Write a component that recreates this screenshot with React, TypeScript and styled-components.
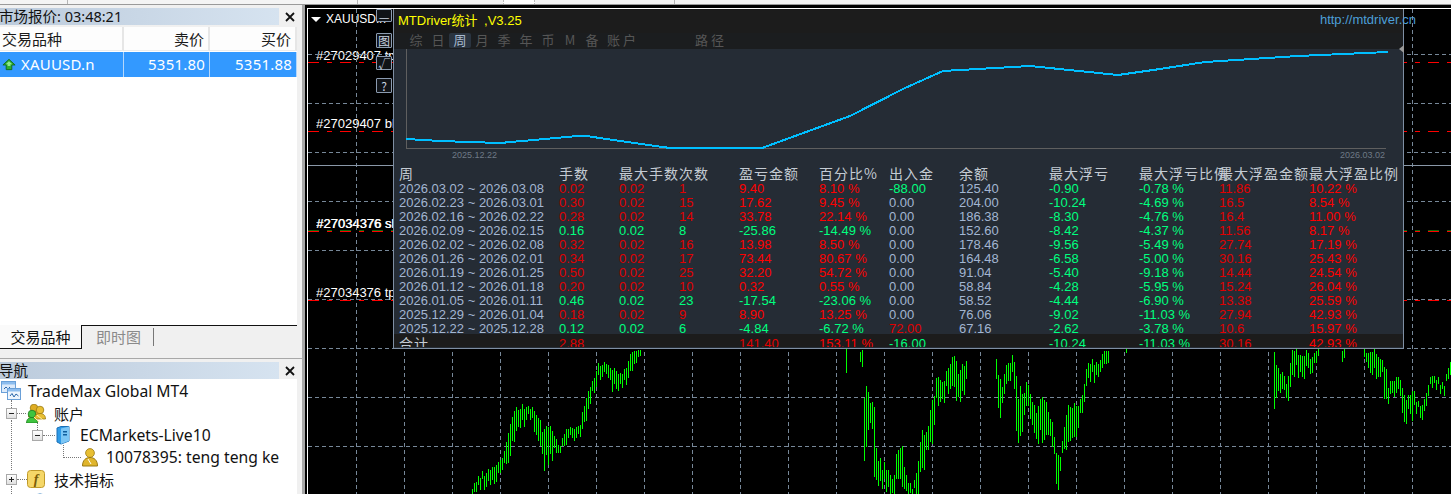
import React from "react";
import styled, { createGlobalStyle } from "styled-components";

const Global = createGlobalStyle`
  html, body { margin: 0; padding: 0; background: #f0f0f0; }
  #root { width: 1451px; height: 494px; overflow: hidden; }
`;

const UI = `"Noto Sans", "Noto Sans CJK SC", sans-serif`;
const MT = `"Liberation Sans", "Noto Sans CJK SC", sans-serif`;
const CJK = `"Noto Sans CJK SC", "Liberation Sans", sans-serif`;

const Page = styled.div`
  width: 1451px;
  height: 494px;
  display: flex;
  flex-direction: column;
  overflow: hidden;
  background: #f0f0f0;
`;
const TopStrip = styled.div`
  height: 4px;
  flex: none;
  display: flex;
  background: #f4f4f4;
  border-bottom: 1px solid #9a9a9a;
`;
const StripTick = styled.span<{ $at: number; $w?: number }>`
  margin-left: ${(p) => p.$at}px;
  width: ${(p) => p.$w ?? 1}px;
  background: ${(p) => (p.$w ? "#fff" : "#b5b5b5")};
  border-left: ${(p) => (p.$w ? "1px dotted #bbb" : "0")};
  border-right: ${(p) => (p.$w ? "1px dotted #bbb" : "0")};
`;
const Main = styled.div`
  flex: 1;
  display: flex;
  min-height: 0;
`;
const Sidebar = styled.aside`
  width: 305px;
  flex: none;
  display: flex;
  flex-direction: column;
  padding-top: 3px;
  box-sizing: border-box;
  border-right: 3px solid #a8a8a8;
  font-family: ${UI};
`;
const PanelHeader = styled.div`
  display: flex;
  align-items: center;
  height: 17px;
  flex: none;
`;
const PanelTitle = styled.div`
  width: 279px;
  height: 17px;
  flex: none;
  background: linear-gradient(90deg, #bccbdc 0%, #d6e3f0 100%);
  font-size: 14.5px;
  line-height: 17px;
  color: #111;
  white-space: nowrap;
  overflow: hidden;
  text-indent: -1px;
`;
const CloseBox = styled.div`
  width: 22px;
  display: flex;
  justify-content: center;
  svg { display: block; }
`;
const Watch = styled.section`
  height: 298px;
  flex: none;
  width: 297px;
  margin-top: 2px;
  background: #fff;
`;
const QuoteGrid = styled.div`
  display: grid;
  grid-template-columns: 124px 86px 87px;
`;
const QuoteHead = styled.div<{ $right?: boolean }>`
  height: 24px;
  box-sizing: border-box;
  margin-bottom: 1px;
  padding: 0 ${(p) => (p.$right ? "4px" : "2px")};
  text-align: ${(p) => (p.$right ? "right" : "left")};
  background: #fdfdfd;
  border-right: 2px solid #e6e6e6;
  border-bottom: 1px solid #ececec;
  font-family: ${CJK};
  font-size: 15px;
  line-height: 23px;
  color: #1b1b1b;
`;
const QuoteCell = styled.div<{ $right?: boolean }>`
  height: 25px;
  box-sizing: border-box;
  display: flex;
  align-items: center;
  justify-content: ${(p) => (p.$right ? "flex-end" : "flex-start")};
  padding: 0 ${(p) => (p.$right ? "4px" : "2px")} 2px;
  gap: 5px;
  background: #3399ff;
  border-right: 1px solid #b5d7fb;
  color: #fff;
  font-size: 15px;
  letter-spacing: 0.2px;
  svg { flex: none; margin-top: 2px; }
`;
const PanelTabs = styled.div`
  height: 29px;
  flex: none;
  width: 297px;
  display: flex;
  align-items: flex-start;
  border-top: 1px solid #111;
  box-sizing: border-box;
  background: #f0f0f0;
  font-family: ${CJK};
  font-size: 15px;
`;
const ActiveTab = styled.div`
  width: 82px;
  height: 24px;
  box-sizing: border-box;
  margin-top: -1px;
  border-right: 1px solid #111;
  border-bottom: 1px solid #111;
  background: #fafafa;
  text-align: center;
  line-height: 24px;
  color: #111;
  position: relative;
`;
const IdleTab = styled.div`
  margin: 2px 0 0 0;
  padding: 0 12px 0 14px;
  height: 18px;
  line-height: 18px;
  color: #8a8a8a;
  border-right: 1px solid #777;
`;
const Divider = styled.div`
  height: 4px;
  flex: none;
  margin-bottom: 3px;
  border-bottom: 1px solid #a8a8a8;
`;
const Tree = styled.section`
  flex: 1;
  width: 297px;
  background: #fff;
  overflow: hidden;
  padding-top: 1px;
  position: relative;
`;
const Rail = styled.span<{ $x: number; $top: number; $h: number }>`
  position: absolute;
  left: ${(p) => p.$x}px;
  top: ${(p) => p.$top}px;
  height: ${(p) => p.$h}px;
  border-left: 1px dotted #777;
`;
const TreeRow = styled.div<{ $indent: number }>`
  height: 22px;
  display: flex;
  align-items: center;
  padding-left: ${(p) => p.$indent}px;
  font-size: 15.7px;
  color: #111;
  white-space: nowrap;
`;
const Expander = styled.span`
  width: 11px;
  height: 11px;
  box-sizing: border-box;
  flex: none;
  border: 1px solid #a9a9a9;
  background: linear-gradient(#fff, #e0e0e0);
  position: relative;
  &::before {
    content: "";
    position: absolute;
    left: 2px; right: 2px; top: 4px; height: 1px;
    background: #222;
  }
`;
const PlusExpander = styled(Expander)`
  &::after {
    content: "";
    position: absolute;
    top: 2px; bottom: 2px; left: 4px; width: 1px;
    background: #222;
  }
`;
const Dots = styled.span<{ $w: number }>`
  width: ${(p) => p.$w}px;
  flex: none;
  border-top: 1px dotted #777;
`;
const Elbow = styled.span<{ $w: number }>`
  width: ${(p) => p.$w}px;
  height: 13px;
  flex: none;
  margin-top: -12px;
  border-left: 1px dotted #777;
  border-bottom: 1px dotted #777;
  box-sizing: border-box;
`;
const TreeLabel = styled.span<{ $gap: number; $cjk?: boolean }>`
  margin-left: ${(p) => p.$gap}px;
  font-family: ${(p) => (p.$cjk ? CJK : UI)};
  font-size: ${(p) => (p.$cjk ? "15px" : "inherit")};
`;
const IconSlot = styled.span`
  display: flex;
  flex: none;
  svg { display: block; }
`;

const ChartArea = styled.main`
  flex: 1;
  min-width: 0;
  background: #000;
  padding: 3px 0 0 2px;
`;
const Canvas = styled.div`
  position: relative;
  height: 100%;
  border-top: 1px solid #fff;
  border-left: 1px solid #fff;
  font-family: ${MT};
  svg.chart { position: absolute; left: 0; top: 0; }
`;
const SymbolLabel = styled.div`
  position: absolute;
  left: 3px;
  top: 3px;
  display: flex;
  align-items: center;
  gap: 5px;
  width: 75px;
  overflow: hidden;
  white-space: nowrap;
  color: #fff;
  font-size: 12px;
  line-height: 15px;
`;
const SymbolCaret = styled.span`
  flex: none;
  width: 0;
  height: 0;
  border-left: 5px solid transparent;
  border-right: 5px solid transparent;
  border-top: 5px solid #fff;
`;
const OrderLabel = styled.div<{ $top: number; $heavy?: boolean }>`
  position: absolute;
  left: 8px;
  top: ${(p) => p.$top}px;
  width: 77px;
  overflow: hidden;
  white-space: nowrap;
  color: #fff;
  font-size: 13px;
  line-height: 15px;
  text-shadow: ${(p) => (p.$heavy ? "0.6px 0 #fff" : "none")};
`;
const ChartButton = styled.div<{ $top: number; $h: number }>`
  position: absolute;
  left: 68px;
  top: ${(p) => p.$top}px;
  width: 14px;
  height: ${(p) => p.$h}px;
  border: 1px solid #8b9bb0;
  border-radius: 1px;
  background: #101317;
  color: #c9d3e0;
  font-family: ${CJK};
  font-size: 12px;
  line-height: 13px;
  text-align: center;
`;

const Window = styled.div`
  position: absolute;
  left: 85px;
  top: 0;
  width: 1011px;
  height: 340px;
  box-sizing: border-box;
  display: flex;
  flex-direction: column;
  background: #252c35;
  border-left: 1px solid #7f8fa3;
  border-right: 1px solid #7f8fa3;
  border-bottom: 1px solid #7f8fa3;
`;
const TitleBar = styled.div`
  height: 24px;
  flex: none;
  display: flex;
  align-items: center;
  justify-content: space-between;
  padding: 0 0 3px 4px;
  box-sizing: border-box;
  background: #1c1c1c;
  font-size: 13px;
  word-spacing: 3px;
  color: #ffff00;
  white-space: nowrap;
`;
const SiteLink = styled.span`
  color: #4c9fd8;
  margin-right: -13px;
  position: relative;
  font-size: 13px;
`;
const TabBar = styled.div`
  height: 16px;
  flex: none;
  display: flex;
  padding-left: 11px;
  background: #1b1d1f;
  font-family: ${CJK};
  font-size: 13px;
  color: #565656;
`;
const PeriodTab = styled.span<{ $active?: boolean; $w?: number; $gap?: number }>`
  width: ${(p) => p.$w ?? 22}px;
  margin-left: ${(p) => p.$gap ?? 0}px;
  height: 15px;
  line-height: 13px;
  text-align: center;
  letter-spacing: ${(p) => (p.$w ? "3px" : "0")};
  border-radius: 2px;
  color: ${(p) => (p.$active ? "#a9b9ce" : "inherit")};
  background: ${(p) => (p.$active ? "#2a3440" : "transparent")};
`;
const Plot = styled.div`
  height: 116px;
  flex: none;
  position: relative;
  svg { display: block; }
`;
const DateMark = styled.span<{ $left: number }>`
  position: absolute;
  left: ${(p) => p.$left}px;
  top: 100px;
  font-size: 9px;
  line-height: 12px;
  color: #6f7a86;
`;
const EdgeMark = styled.span`
  position: absolute;
  right: -1px;
  top: -4px;
  width: 0;
  height: 0;
  border-top: 4px solid transparent;
  border-bottom: 4px solid transparent;
  border-right: 5px solid #9a9a9a;
`;
const Table = styled.div`
  flex: 1;
  min-height: 0;
  overflow: hidden;
  display: grid;
  grid-template-columns: 165px 60px 60px 60px 80px 70px 70px 90px 90px 80px 90px 1fr;
  grid-auto-rows: 14px;
  grid-template-rows: 15px;
  font-size: 13px;
  white-space: nowrap;
`;
const HeadCell = styled.div<{ $first?: boolean }>`
  padding-left: ${(p) => (p.$first ? "5px" : "0")};
  font-family: ${CJK};
  font-size: 14px;
  line-height: 16px;
  letter-spacing: 1px;
  color: #c4cbd3;
`;
const toneColor: Record<string, string> = {
  label: "#a3b6d2",
  red: "#e00000",
  bright: "#ff0000",
  green: "#00ff7f",
};
const Cell = styled.div<{ $tone: string; $first?: boolean }>`
  padding-left: ${(p) => (p.$first ? "5px" : "0")};
  line-height: 17px;
  color: ${(p) => toneColor[p.$tone]};
`;
const TotalCell = styled.div<{ $tone: string; $first?: boolean }>`
  height: 13px;
  overflow: hidden;
  background: #1c1c1c;
  padding-left: ${(p) => (p.$first ? "5px" : "0")};
  font-family: ${(p) => (p.$first ? CJK : MT)};
  font-size: ${(p) => (p.$first ? "14px" : "13px")};
  line-height: 19px;
  letter-spacing: ${(p) => (p.$first ? "1px" : "0")};
  color: ${(p) => (p.$first ? "#c4cbd3" : toneColor[p.$tone])};
`;

/* ---------- data ---------- */
const heads = ["周", "手数", "最大手数", "次数", "盈亏金额", "百分比%", "出入金", "余额", "最大浮亏", "最大浮亏比例", "最大浮盈金额", "最大浮盈比例"];
type Row = [string, string, string, string, string, string, string, string, string, string, string, string];
const rows: Row[] = [
  ["2026.03.02 ~ 2026.03.08", "0.02", "0.02", "1", "9.40", "8.10 %", "-88.00", "125.40", "-0.90", "-0.78 %", "11.86", "10.22 %"],
  ["2026.02.23 ~ 2026.03.01", "0.30", "0.02", "15", "17.62", "9.45 %", "0.00", "204.00", "-10.24", "-4.69 %", "16.5", "8.54 %"],
  ["2026.02.16 ~ 2026.02.22", "0.28", "0.02", "14", "33.78", "22.14 %", "0.00", "186.38", "-8.30", "-4.76 %", "16.4", "11.00 %"],
  ["2026.02.09 ~ 2026.02.15", "0.16", "0.02", "8", "-25.86", "-14.49 %", "0.00", "152.60", "-8.42", "-4.37 %", "11.56", "8.17 %"],
  ["2026.02.02 ~ 2026.02.08", "0.32", "0.02", "16", "13.98", "8.50 %", "0.00", "178.46", "-9.56", "-5.49 %", "27.74", "17.19 %"],
  ["2026.01.26 ~ 2026.02.01", "0.34", "0.02", "17", "73.44", "80.67 %", "0.00", "164.48", "-6.58", "-5.00 %", "30.16", "25.43 %"],
  ["2026.01.19 ~ 2026.01.25", "0.50", "0.02", "25", "32.20", "54.72 %", "0.00", "91.04", "-5.40", "-9.18 %", "14.44", "24.54 %"],
  ["2026.01.12 ~ 2026.01.18", "0.20", "0.02", "10", "0.32", "0.55 %", "0.00", "58.84", "-4.28", "-5.95 %", "15.24", "26.04 %"],
  ["2026.01.05 ~ 2026.01.11", "0.46", "0.02", "23", "-17.54", "-23.06 %", "0.00", "58.52", "-4.44", "-6.90 %", "13.38", "25.59 %"],
  ["2025.12.29 ~ 2026.01.04", "0.18", "0.02", "9", "8.90", "13.25 %", "0.00", "76.06", "-9.02", "-11.03 %", "27.94", "42.93 %"],
  ["2025.12.22 ~ 2025.12.28", "0.12", "0.02", "6", "-4.84", "-6.72 %", "72.00", "67.16", "-2.62", "-3.78 %", "10.6", "15.97 %"],
];
const totals = ["合计", "2.88", "", "", "141.40", "153.11 %", "-16.00", "", "-10.24", "-11.03 %", "30.16", "42.93 %"];

function toneFor(col: number, value: string, loss: boolean): string {
  if (col === 0 || col === 7) return "label";
  if (col === 6) return value === "0.00" ? "label" : value.startsWith("-") ? "green" : "red";
  if (col === 8 || col === 9) return "green";
  if (col === 10) return "red";
  if (col === 11) return "bright";
  if (loss) return "green";
  return col === 4 || col === 5 ? "bright" : "red";
}
const totalTones = ["label", "red", "red", "red", "red", "bright", "green", "label", "green", "green", "red", "bright"];

type Pt = [number, number, number];
const candleSegments: Pt[][] = [
  [[471,487,494],[478,477,487],[492,465,480],[503,455,468],[509,423,453],[516,400,430],[529,408,418],[537,410,440],[544,418,467],[552,428,457],[559,445,448],[566,425,438],[579,427,438],[583,407,432],[587,390,410],[592,380,392],[598,362,377],[607,362,373],[614,370,395],[624,370,383],[631,348,365],[640,350,355]],
  [[846,348,373]],
  [[859,348,353],[862,350,372],[863,370,445],[865,370,494],[867,368,423],[869,398,440],[872,398,427],[874,402,473],[877,453,483],[880,457,494],[893,478,494],[896,455,494],[898,438,494],[902,443,487],[905,473,494],[913,488,494],[918,457,494],[921,428,462],[924,423,472],[927,430,453],[933,377,437],[936,370,403],[942,380,402],[947,368,392],[953,348,383],[958,363,403],[964,362,390],[967,348,372]],
  [[995,348,360],[998,373,418],[1002,377,407],[1007,358,387],[1013,348,375],[1016,363,450],[1022,390,430],[1027,372,397],[1031,397,420],[1037,405,440],[1044,390,443],[1049,413,437],[1053,422,448],[1057,447,494],[1060,453,465],[1064,423,447],[1069,393,440],[1077,403,428],[1082,392,408],[1086,368,397],[1091,360,382],[1098,362,375],[1103,348,360],[1109,348,360]],
  [[1125,348,353]],
  [[1274,348,405],[1277,363,390],[1282,370,390],[1287,380,400],[1291,348,380],[1299,350,372],[1310,353,377],[1315,348,365],[1319,348,355]],
  [[1341,348,355],[1344,348,360]],
  [[1364,348,360],[1377,348,377],[1381,358,370],[1386,367,413],[1388,383,400],[1393,378,392],[1399,372,388],[1404,390,423],[1408,397,418],[1412,387,418],[1417,402,407],[1422,403,417],[1426,390,402],[1432,373,383],[1441,382,388],[1445,382,390],[1450,358,373]],
];
function candleBars(): { x: number; t: number; b: number }[] {
  const bars: { x: number; t: number; b: number }[] = [];
  const lattice = (v: number) => v + (v % 2);
  const rnd = (v: number) => v - Math.floor(v);
  for (const seg of candleSegments) {
    if (seg.length === 1) {
      bars.push({ x: lattice(seg[0][0]), t: seg[0][1], b: seg[0][2] });
      continue;
    }
    for (let x = lattice(seg[0][0]); x <= seg[seg.length - 1][0]; x += 2) {
      const i = Math.max(0, seg.findIndex((p, n) => n + 1 < seg.length && x >= p[0] && x <= seg[n + 1][0]));
      const [x0, t0, b0] = seg[i];
      const [x1, t1, b1] = seg[i + 1];
      const k = (x - x0) / (x1 - x0);
      const lo = t0 + (t1 - t0) * k;
      const hi = b0 + (b1 - b0) * k;
      const j1 = rnd(Math.sin(x * 12.9898) * 43758.5453);
      const j2 = rnd(Math.sin(x * 78.233) * 12543.12);
      const len = (hi - lo) * (0.4 + 0.6 * j1) + 3;
      const start = lo + (hi - lo - len + 3) * j2 + (j1 - 0.5) * 8;
      const t = Math.max(348, Math.round(start));
      bars.push({ x, t, b: Math.round(t + len) });
    }
  }
  return bars;
}

const verticals = Array.from({ length: 23 }, (_, i) => 356 + 48 * i);
const horizontals = Array.from({ length: 9 }, (_, i) => 54 + 49 * i);
const orderLines = [62, 131, 231, 300];
const equity = "406,139 440,141 500,143 583,135.5 620,141 670,148 762,148 850,116 905,88 943,71 1030,66 1118,75 1160,69 1205,62 1298,56 1388,52";

/* ---------- icons ---------- */
const CloseIcon = () => (
  <svg width="10" height="10" viewBox="0 0 10 10"><path d="M1 1L9 9M9 1L1 9" stroke="#111" strokeWidth="1.8" /></svg>
);
const UpArrow = () => (
  <svg width="14" height="13" viewBox="0 0 15 13">
    <path d="M7.5 1L14 7H10.5V12H4.5V7H1Z" fill="#2fae2f" stroke="#0f6b1f" strokeWidth="1" />
    <path d="M7.5 3L4 6.2H6V8H9V6.2H11Z" fill="#8fe88f" />
  </svg>
);
const RootIcon = () => (
  <svg width="20" height="20" viewBox="0 0 20 20">
    <rect x="0.5" y="0.5" width="14" height="11" fill="#dceafa" stroke="#6aa0d8" />
    <rect x="1" y="1" width="13" height="2.5" fill="#8dbdee" />
    <path d="M3 8L5 6L7 8L9 6" fill="none" stroke="#2a66a8" />
    <rect x="6.5" y="7.5" width="13" height="11" fill="#eef5fd" stroke="#6aa0d8" />
    <rect x="7" y="8" width="12" height="2.5" fill="#8dbdee" />
    <path d="M9 15L11 12.5L13 16L15 13L17.5 15" fill="none" stroke="#2a66a8" />
  </svg>
);
const Person = ({ x, y, c = "#e8bf33", s = "#9a7a12" }: { x: number; y: number; c?: string; s?: string }) => (
  <g transform={`translate(${x} ${y})`}>
    <circle cx="6" cy="4" r="3.8" fill={c} stroke={s} strokeWidth="0.8" />
    <path d="M0.5 13C0.5 9 3 7.5 6 7.5S11.5 9 11.5 13Z" fill={c} stroke={s} strokeWidth="0.8" />
  </g>
);
const UsersIcon = () => (
  <svg width="20" height="19" viewBox="0 0 20 19">
    <Person x={2} y={0} c="#e0ad22" />
    <Person x={0} y={6} c="#3fc43f" s="#1d7a1d" />
    <Person x={8} y={2} />
    <path d="M8 13L13 18M11 11L17 16" stroke="#fff2a8" />
  </svg>
);
const ServerIcon = () => (
  <svg width="16" height="20" viewBox="0 0 16 20">
    <path d="M2 3L6 1.5H14V16L6 19L2 17Z" fill="#2e9be8" stroke="#1a6fb5" />
    <path d="M6 3.5L14 1.5V16L6 19Z" fill="#7cc6f5" />
    <rect x="8" y="6" width="4" height="1.5" fill="#0f5d9c" />
    <rect x="8" y="9" width="4" height="1.5" fill="#0f5d9c" />
  </svg>
);
const UserIcon = () => (
  <svg width="18" height="19" viewBox="0 0 18 19">
    <circle cx="9" cy="5" r="4.4" fill="#e8bf33" stroke="#9a7a12" strokeWidth="0.8" />
    <path d="M1.5 18C1.5 12 5 9.5 9 9.5S16.5 12 16.5 18Z" fill="#e0b52c" stroke="#9a7a12" />
    <path d="M7 11L10 16" stroke="#fff" />
  </svg>
);
const FuncIcon = () => (
  <svg width="18" height="18" viewBox="0 0 18 18">
    <rect x="0.5" y="0.5" width="17" height="17" rx="3" fill="#f5d768" stroke="#c09a2a" />
    <text x="9" y="14" textAnchor="middle" fontFamily="Liberation Serif, serif" fontStyle="italic" fontWeight="700" fontSize="14" fill="#7a5c08">f</text>
  </svg>
);
const ScriptIcon = () => (
  <svg width="16" height="16" viewBox="0 0 16 16"><circle cx="8" cy="8" r="7" fill="#3a9ad9" stroke="#1a6fb5" /></svg>
);

export default function App() {
  const bars = candleBars();
  return (
    <Page>
      <Global />
      <TopStrip>
        <StripTick $at={67} />
        <StripTick $at={289} />
        <StripTick $at={145} $w={30} />
        <StripTick $at={139} />
      </TopStrip>
      <Main>
        <Sidebar>
          <PanelHeader>
            <PanelTitle>市场报价: 03:48:21</PanelTitle>
            <CloseBox><CloseIcon /></CloseBox>
          </PanelHeader>
          <Watch>
            <QuoteGrid>
              <QuoteHead>交易品种</QuoteHead>
              <QuoteHead $right>卖价</QuoteHead>
              <QuoteHead $right>买价</QuoteHead>
              <QuoteCell><UpArrow />XAUUSD.n</QuoteCell>
              <QuoteCell $right>5351.80</QuoteCell>
              <QuoteCell $right>5351.88</QuoteCell>
            </QuoteGrid>
          </Watch>
          <PanelTabs>
            <ActiveTab>交易品种</ActiveTab>
            <IdleTab>即时图</IdleTab>
          </PanelTabs>
          <Divider />
          <PanelHeader>
            <PanelTitle>导航</PanelTitle>
            <CloseBox><CloseIcon /></CloseBox>
          </PanelHeader>
          <Tree>
            <Rail $x={11} $top={21} $h={8} />
            <Rail $x={11} $top={41} $h={50} />
            <Rail $x={11} $top={107} $h={10} />
            <Rail $x={37} $top={44} $h={7} />
            <TreeRow $indent={1}><IconSlot><RootIcon /></IconSlot><TreeLabel $gap={7}>TradeMax Global MT4</TreeLabel></TreeRow>
            <TreeRow $indent={6}><Expander /><Dots $w={9} /><IconSlot><UsersIcon /></IconSlot><TreeLabel $gap={8} $cjk>账户</TreeLabel></TreeRow>
            <TreeRow $indent={32}><Expander /><Dots $w={12} /><IconSlot><ServerIcon /></IconSlot><TreeLabel $gap={9}>ECMarkets-Live10</TreeLabel></TreeRow>
            <TreeRow $indent={63}><Elbow $w={18} /><IconSlot><UserIcon /></IconSlot><TreeLabel $gap={7}>10078395: teng teng ke</TreeLabel></TreeRow>
            <TreeRow $indent={6}><PlusExpander /><Dots $w={10} /><IconSlot><FuncIcon /></IconSlot><TreeLabel $gap={9} $cjk>技术指标</TreeLabel></TreeRow>
            <TreeRow $indent={32}><IconSlot><ScriptIcon /></IconSlot></TreeRow>
          </Tree>
        </Sidebar>
        <ChartArea>
          <Canvas>
            <SymbolLabel><SymbolCaret />XAUUSD.n</SymbolLabel>
            <OrderLabel $top={39}>#27029407 tp</OrderLabel>
            <OrderLabel $top={107}>#27029407 bl</OrderLabel>
            <OrderLabel $top={207} $heavy>#27034376 sl</OrderLabel>
            <OrderLabel $top={276}>#27034376 tp</OrderLabel>
            <svg className="chart" width="1143" height="485" viewBox="308 9 1143 485">
              <g stroke="#778899" strokeWidth="1" strokeDasharray="4 3" shapeRendering="crispEdges">
                {verticals.map((x) => <line key={x} x1={x + 0.5} x2={x + 0.5} y1={9} y2={494} />)}
                {horizontals.map((y) => <line key={y} x1={308} x2={1451} y1={y + 0.5} y2={y + 0.5} />)}
              </g>
              <line x1={308} x2={1451} y1={165.5} y2={165.5} stroke="#8a98a8" shapeRendering="crispEdges" />
              <g fill="#00ff00">
                {bars.map((b) => <rect key={b.x} x={b.x} y={b.t} width={1} height={b.b - b.t} />)}
              </g>
              <line x1={308} x2={1451} y1={230.5} y2={230.5} stroke="#0a6a0a" strokeDasharray="11 8 5 8" shapeRendering="crispEdges" />
              <g stroke="#ff0000" strokeDasharray="11 8 5 8" shapeRendering="crispEdges">
                {orderLines.map((y) => <line key={y} x1={308} x2={1451} y1={y + 0.5} y2={y + 0.5} />)}
              </g>
            </svg>
            <ChartButton $top={0} $h={11}>—</ChartButton>
            <ChartButton $top={24} $h={13}>图</ChartButton>
            <ChartButton $top={47} $h={12}>√</ChartButton>
            <ChartButton $top={69} $h={13}>?</ChartButton>
            <Window>
              <TitleBar>
                <span>MTDriver统计 ,V3.25</span>
                <SiteLink>http://mtdriver.cn</SiteLink>
              </TitleBar>
              <TabBar>
                {["综", "日"].map((t) => <PeriodTab key={t}>{t}</PeriodTab>)}
                <PeriodTab $active>周</PeriodTab>
                {["月", "季", "年", "币", "M", "备"].map((t) => <PeriodTab key={t}>{t}</PeriodTab>)}
                <PeriodTab $w={40}>账户</PeriodTab>
                <PeriodTab $w={40} $gap={48}>路径</PeriodTab>
              </TabBar>
              <Plot>
                <svg width="1009" height="116" viewBox="394 49 1009 116">
                  <path d="M406.5 49V148.5H1386" fill="none" stroke="#5f5f5f" shapeRendering="crispEdges" />
                  <polyline points={equity} fill="none" stroke="#00bfff" strokeWidth="2" shapeRendering="crispEdges" />
                </svg>
                <DateMark $left={58}>2025.12.22</DateMark>
                <DateMark $left={946}>2026.03.02</DateMark>
                <EdgeMark />
              </Plot>
              <Table>
                {heads.map((h, i) => <HeadCell key={h} $first={i === 0}>{h}</HeadCell>)}
                {rows.map((row) => {
                  const loss = row[4].startsWith("-");
                  return row.map((v, c) => (
                    <Cell key={row[0] + c} $first={c === 0} $tone={toneFor(c, v, loss)}>{v}</Cell>
                  ));
                })}
                {totals.map((v, c) => <TotalCell key={c} $first={c === 0} $tone={totalTones[c]}>{v}</TotalCell>)}
              </Table>
            </Window>
          </Canvas>
        </ChartArea>
      </Main>
    </Page>
  );
}
